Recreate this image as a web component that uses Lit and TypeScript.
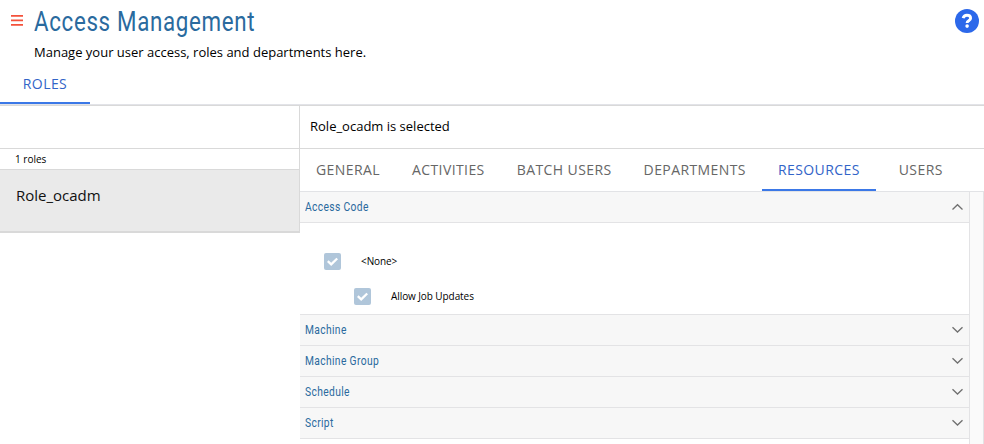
import { LitElement, html, css, svg } from "lit";
import { customElement, property, state } from "lit/decorators.js";
import { classMap } from "lit/directives/class-map.js";

@customElement("check-box")
class CheckBox extends LitElement {
  @property() label = "";

  static styles = css`
    :host { display: flex; align-items: center; height: 17px; }
    svg { display: block; width: 17px; height: 17px; margin-right: 20px; }
    span { font-size: 10px; line-height: 16px; margin-top: -2px; letter-spacing: -0.08px; color: #000; white-space: nowrap; }
  `;

  render() {
    return html`
      <svg viewBox="0 0 17 17">
        <rect width="17" height="17" rx="2" fill="#b0c6da"></rect>
        <path d="M3.8 8.2 L7.2 11.4 L13.2 5.5" fill="none" stroke="#fff" stroke-width="2.3"></path>
      </svg>
      <span>${this.label}</span>
    `;
  }
}

@customElement("accordion-panel")
class AccordionPanel extends LitElement {
  @property() heading = "";
  @property({ type: Boolean }) open = false;

  static styles = css`
    :host { display: block; border-bottom: 1px solid #e3e3e5; }
    .head {
      display: flex; align-items: center; justify-content: space-between;
      height: 30px; padding: 0 5px; background: #f7f7f7; cursor: pointer;
    }
    .title {
      font: 400 13px/20px Roboto, sans-serif; color: #2a6a9e; letter-spacing: 0.45px;
      transform: scaleX(0.79); transform-origin: 0 50%; white-space: nowrap;
    }
    svg { display: block; width: 13px; height: 8px; }
    .body { border-top: 1px solid #e3e3e5; background: #fff; height: 91px; }
  `;

  render() {
    return html`
      <div class="head" @click=${() => (this.open = !this.open)}>
        <span class="title">${this.heading}</span>
        <svg viewBox="0 0 13 8">
          ${this.open
            ? svg`<path d="M1.5 6.5 L6.5 1.7 L11.5 6.5" fill="none" stroke="#707070" stroke-width="1.3"/>`
            : svg`<path d="M1.5 1.2 L6.5 6 L11.5 1.2" fill="none" stroke="#707070" stroke-width="1.3"/>`}
        </svg>
      </div>
      ${this.open ? html`<div class="body"><slot></slot></div>` : ""}
    `;
  }
}

@customElement("app-root")
class AppRoot extends LitElement {
  @state() tab = "Resources";

  static styles = css`
    * { box-sizing: border-box; }
    :host {
      display: flex; flex-direction: column; width: 100%; height: 444px; overflow: hidden;
      background: #fff; color: #000; font-family: "Open Sans", "Noto Sans", sans-serif;
    }
    header { display: flex; height: 64px; flex: none; }
    .burger { display: block; width: 12px; height: 12px; margin: 15px 0 0 11px; }
    .titles { flex: 1; padding: 6px 0 0 11px; }
    h1 {
      margin: 0; width: max-content; font: 400 27px/32px Roboto, sans-serif; color: #2a6a9e;
      letter-spacing: 0.8px; transform: scaleX(0.827); transform-origin: 0 50%; white-space: nowrap;
    }
    p { margin: 5px 0 0; font-size: 13px; line-height: 18px; }
    .help { display: block; width: 24px; height: 24px; margin: 9px 5px 0 0; }
    .tabs { display: flex; flex: none; }
    .tab {
      min-width: 90px; padding: 0 16px; text-align: center; text-transform: uppercase;
      font-size: 14px; letter-spacing: 0.41px; color: #666; white-space: nowrap;
      border-bottom: 2px solid transparent; cursor: pointer;
    }
    .tab.on { color: #3264c8; border-color: #3b78e7; }
    .main-tabs { height: 40px; line-height: 40px; border-bottom: 0; }
    .split {
      display: flex; flex: 1; min-height: 0; border-top: 1px solid #e2e3e8;
    }
    aside { width: 300px; flex: none; }
    .list { border-right: 1px solid #d9d9d9; border-top: 1px solid #d9d9d9; height: 128px; }
    .filter { height: 43px; border-bottom: 1px solid #d9d9d9; }
    .count { height: 21px; padding-left: 15px; font-size: 10px; line-height: 20px; border-bottom: 1px solid #d9d9d9; }
    .role {
      height: 63px; padding: 12px 16px; background: #eaeaea; border-bottom: 2px solid #d9d9d9;
      font-size: 15px; line-height: 26px; color: #111;
    }
    main { flex: 1; min-width: 0; display: flex; flex-direction: column; border-top: 1px solid #d9d9d9; }
    .selected { height: 43px; flex: none; border-bottom: 1px solid #d9d9d9; padding-left: 10px; font-size: 13px; line-height: 41px; }
    .sub-tabs { height: 43px; line-height: 42px; border-bottom: 1px solid #e2e3e6; }
    .scroller { display: flex; flex: 1; min-height: 0; }
    .panels { flex: 1; overflow: hidden; }
    .track { width: 15px; background: #fafafa; border: solid #e3e3e5; border-width: 0 1px; }
    .l1 { margin: 30px 0 0 24px; }
    .l2 { margin: 18px 0 0 54px; }
  `;

  render() {
    const tabs = ["General", "Activities", "Batch Users", "Departments", "Resources", "Users"];
    return html`
      <header>
        <svg class="burger" viewBox="0 0 12 12">
          <path d="M0 .9H12M0 5.4H12M0 9.9H12" stroke="#f4523b" stroke-width="1.8"></path>
        </svg>
        <div class="titles">
          <h1>Access Management</h1>
          <p>Manage your user access, roles and departments here.</p>
        </div>
        <svg class="help" viewBox="0 0 24 24">
          <circle cx="12" cy="12" r="12" fill="#2c68ea"></circle>
          <path d="M8.1 9.1C8.7 7.2 10 6.3 11.9 6.3c2.2 0 3.7 1.1 3.7 2.9 0 2.6-3.5 2.4-3.5 4.7" fill="none" stroke="#fff" stroke-width="2.9"></path>
          <circle cx="12.1" cy="17.1" r="1.8" fill="#fff"></circle>
        </svg>
      </header>
      <div class="tabs main-tabs"><div class="tab on">Roles</div></div>
      <div class="split">
        <aside>
          <div class="list">
            <div class="filter"></div>
            <div class="count">1 roles</div>
            <div class="role">Role_ocadm</div>
          </div>
        </aside>
        <main>
          <div class="selected">Role_ocadm is selected</div>
          <div class="tabs sub-tabs">
            ${tabs.map(
              (t) => html`<div class=${classMap({ tab: true, on: t === this.tab })} @click=${() => (this.tab = t)}>${t}</div>`
            )}
          </div>
          <div class="scroller">
            <div class="panels">
              <accordion-panel heading="Access Code" open>
                <check-box class="l1" label="&lt;None&gt;"></check-box>
                <check-box class="l2" label="Allow Job Updates"></check-box>
              </accordion-panel>
              ${["Machine", "Machine Group", "Schedule", "Script"].map(
                (h) => html`<accordion-panel heading=${h}></accordion-panel>`
              )}
            </div>
            <div class="track"></div>
          </div>
        </main>
      </div>
    `;
  }
}
